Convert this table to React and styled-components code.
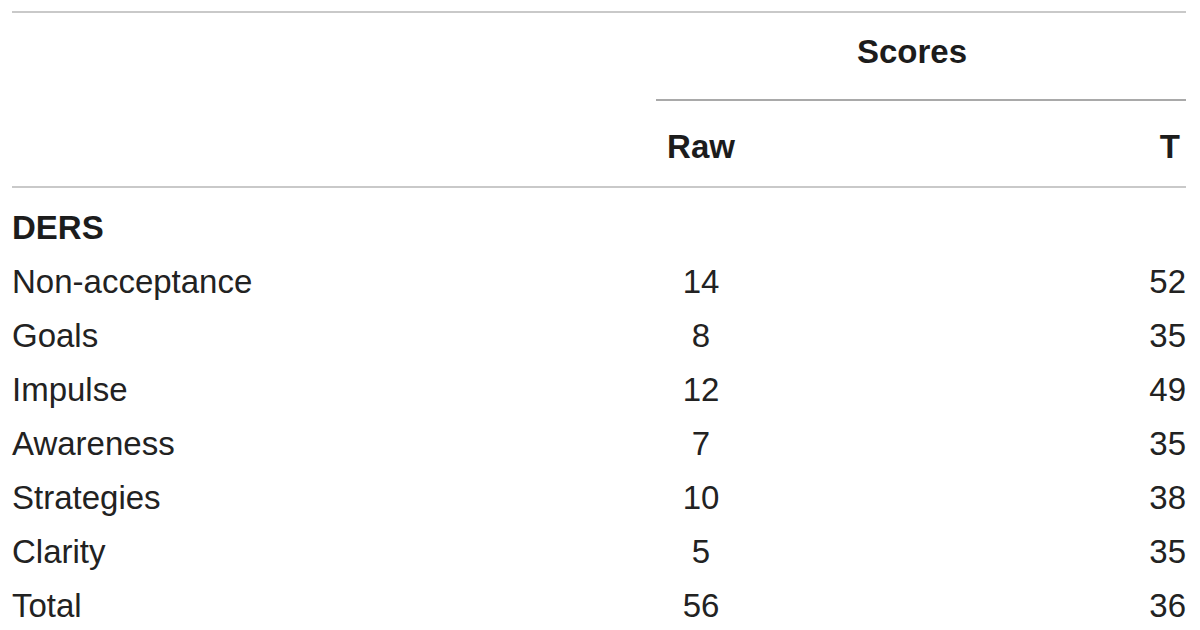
import React from "react";
import styled, { createGlobalStyle } from "styled-components";

const Global = createGlobalStyle`
  html, body { margin: 0; padding: 0; background: #fff; }
  body { font-family: "Liberation Sans", Arial, sans-serif; color: #222; }
`;

const Page = styled.div`
  width: 1200px;
  height: 630px;
  overflow: hidden;
  padding: 11px 14px 0 12px;
  box-sizing: border-box;
`;

const Table = styled.div`
  border-top: 2px solid #c9c9c9;
  font-size: 33px;
`;

const SpanRow = styled.div`
  display: grid;
  grid-template-columns: 644px 1fr;
  height: 88px;
`;

const SpanCell = styled.div`
  border-bottom: 2px solid #a9a9a9;
  text-align: center;
  padding: 12px 18px 0 0;
  line-height: 54px;
  font-weight: 700;
  color: #1c1c1c;
`;

const Row = styled.div`
  display: grid;
  grid-template-columns: 644px 90px 1fr 160px;
  line-height: 54px;
  ${(p) => p.$head && `
    height: 87px;
    padding-top: 19px;
    box-sizing: border-box;
    border-bottom: 2px solid #c9c9c9;
    font-weight: 700;
    color: #1c1c1c;
  `}
`;

const Body = styled.div`
  padding-top: 13px;
`;

const Label = styled.div`
  font-weight: ${(p) => (p.$bold ? 700 : 400)};
  color: ${(p) => (p.$bold ? "#1c1c1c" : "#222")};
`;

const Raw = styled.div`
  text-align: center;
`;

const TCell = styled.div`
  grid-column: 4;
  text-align: right;
  padding-right: ${(p) => (p.$head ? "6px" : "0")};
`;

const rows = [
  ["Non-acceptance", "14", "52"],
  ["Goals", "8", "35"],
  ["Impulse", "12", "49"],
  ["Awareness", "7", "35"],
  ["Strategies", "10", "38"],
  ["Clarity", "5", "35"],
  ["Total", "56", "36"],
];

export default function App() {
  return (
    <>
      <Global />
      <Page>
        <Table>
          <SpanRow>
            <div />
            <SpanCell>Scores</SpanCell>
          </SpanRow>
          <Row $head>
            <div />
            <Raw>Raw</Raw>
            <TCell $head>T</TCell>
          </Row>
          <Body>
            <Row>
              <Label $bold>DERS</Label>
            </Row>
            {rows.map(([l, r, t]) => (
              <Row key={l}>
                <Label>{l}</Label>
                <Raw>{r}</Raw>
                <TCell>{t}</TCell>
              </Row>
            ))}
          </Body>
        </Table>
      </Page>
    </>
  );
}
